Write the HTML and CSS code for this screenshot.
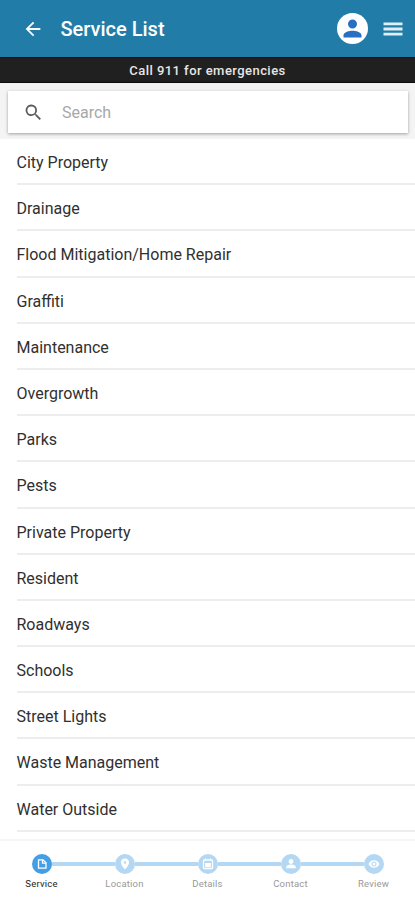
FILE: index.html
```html
<!DOCTYPE html>
<html lang="en">
<head>
<meta charset="utf-8">
<title>Service List</title>
<link rel="stylesheet" href="styles.css">
</head>
<body>
<div class="app">
  <header class="bar">
    <svg class="back" viewBox="0 0 24 24"><path d="M20 11H7.8l5.6-5.6L12 4l-8 8 8 8 1.4-1.4L7.8 13H20z"/></svg>
    <h1 class="title">Service List</h1>
    <span class="avatar"><svg viewBox="0 0 24 24"><path d="M12 12a4 4 0 1 0 0-8 4 4 0 0 0 0 8zm0 2c-2.7 0-8 1.3-8 4v2h16v-2c0-2.7-5.300-4-8-4z"/></svg></span>
    <svg class="menu" viewBox="0 0 24 24"><path d="M2.500 18.500h19v-2.800h-19zm0-5.100h19v-2.800h-19zM2.500 5.500v2.800h19V5.500z"/></svg>
  </header>
  <div class="alert">Call 911 for emergencies</div>
  <div class="search-area">
    <div class="search">
      <svg viewBox="0 0 24 24"><path d="M15.500 14h-.8l-.3-.3A6.500 6.500 0 1 0 13.700 14.400l.3.3v.8l5 5 1.500-1.500zm-6 0a4.500 4.500 0 1 1 0-9 4.500 4.500 0 0 1 0 9z"/></svg>
      <span>Search</span>
    </div>
  </div>
  <ul class="list">
    <li>City Property</li>
    <li>Drainage</li>
    <li>Flood Mitigation/Home Repair</li>
    <li>Graffiti</li>
    <li>Maintenance</li>
    <li>Overgrowth</li>
    <li>Parks</li>
    <li>Pests</li>
    <li>Private Property</li>
    <li>Resident</li>
    <li>Roadways</li>
    <li>Schools</li>
    <li>Street Lights</li>
    <li>Waste Management</li>
    <li>Water Outside</li>
  </ul>
  <nav class="steps">
    <div class="step active">
      <div class="track"><i></i><span class="dot"><svg viewBox="0 0 20 20"><path class="line" d="M6.500 5.800h4.500l3 3v5.400H6.500z"/><path class="line" d="M10.500 6v3.200H14"/></svg></span><i class="on"></i></div>
      <span class="label">Service</span>
    </div>
    <div class="step">
      <div class="track"><i class="on"></i><span class="dot"><svg viewBox="0 0 20 20"><path fill-rule="evenodd" d="M10 4.500a4 4 0 0 0-4 4c0 3 4 7 4 7s4-4 4-7a4 4 0 0 0-4-4zm0 2.800a1.200 1.200 0 1 1 0 2.400 1.200 1.200 0 0 1 0-2.400z"/></svg></span><i class="on"></i></div>
      <span class="label">Location</span>
    </div>
    <div class="step">
      <div class="track"><i class="on"></i><span class="dot"><svg viewBox="0 0 20 20"><rect class="line" x="5.500" y="6" width="9" height="8.500" rx="1"/><path d="M7.200 9h5.600v4H7.200zM7 4.600h1.200V6H7zM11.800 4.600H13V6h-1.200z"/></svg></span><i class="on"></i></div>
      <span class="label">Details</span>
    </div>
    <div class="step">
      <div class="track"><i class="on"></i><span class="dot"><svg viewBox="0 0 20 20"><circle cx="10" cy="7.500" r="2.400"/><path d="M5.300 14.200v-1.400c0-1.600 3-2.400 4.700-2.400s4.700.8 4.700 2.400v1.400z"/></svg></span><i class="on"></i></div>
      <span class="label">Contact</span>
    </div>
    <div class="step">
      <div class="track"><i class="on"></i><span class="dot"><svg viewBox="0 0 20 20"><path fill-rule="evenodd" d="M4.500 10c1-2.300 3-3.700 5.500-3.700s4.500 1.400 5.500 3.700c-1 2.300-3 3.700-5.500 3.700S5.500 12.300 4.500 10zM10 7.500a2.500 2.500 0 1 0 0 5 2.500 2.500 0 0 0 0-5z"/><circle cx="10" cy="10" r="1.500"/></svg></span><i></i></div>
      <span class="label">Review</span>
    </div>
  </nav>
</div>
</body>
</html>
```
FILE: styles.css
```css
* { box-sizing: border-box; }
body { margin: 0; background: #fff; font-family: Roboto, "Liberation Sans", sans-serif; }
.app { width: 415px; height: 900px; display: flex; flex-direction: column; overflow: hidden; }
.bar { height: 57px; flex: none; background: #217da8; display: flex; align-items: center; padding: 0 10px 0 22px; }
.back { width: 22px; height: 22px; fill: #fff; }
.title { margin: 0 auto 0 16.500px; color: #fff; font-size: 20px; line-height: 24px; font-weight: 500; }
.avatar { width: 31px; height: 31px; border-radius: 50%; background: #fff; display: flex; align-items: center; justify-content: center; }
.avatar svg { width: 27px; height: 27px; fill: #286fc4; }
.menu { width: 24px; height: 24px; margin-left: 13px; fill: #e0eef5; }
.alert { height: 26px; flex: none; background: #202020; border-top: 1px solid #0c1216; border-bottom: 1px solid #0c0c0c; color: #e6e6e6; font-size: 13px; font-weight: 500; line-height: 25px; text-align: center; letter-spacing: .45px; }
.search-area { height: 56px; flex: none; background: #f4f4f4; padding: 8px 7px 0 8px; }
.search { height: 42px; background: #fff; display: flex; align-items: center; padding-left: 15px; color: #a8a8a8; font-size: 16px; box-shadow: 0 1px 3px rgba(0,0,0,.35); }
.search svg { width: 21px; height: 21px; fill: #5b5b5b; margin-right: 18px; }
.list { list-style: none; margin: 0; padding: 0 0 0 16.500px; flex: none; }
.list li { height: 46.200px; border-bottom: 2px solid #ededed; color: #303030; font-size: 16px; line-height: 47px; }
.steps { flex: 1; margin-top: 7px; border-top: 2px solid #f5f5f5; display: flex; padding-top: 13px; }
.step { flex: 1; display: flex; flex-direction: column; align-items: center; }
.track { width: 100%; display: flex; align-items: center; }
.track i { flex: 1; height: 4px; }
.track .on { background: #b4d8f3; }
.dot { width: 20px; height: 20px; border-radius: 50%; background: #b4d8f3; display: flex; }
.dot svg { width: 20px; height: 20px; fill: #fff; }
.dot .line { fill: none; stroke: #fff; stroke-width: 1.300; }
.active .dot { background: #429fe5; }
.label { margin-top: 4.500px; font-size: 9.500px; line-height: 12px; color: #999; letter-spacing: .2px; }
.active .label { color: #222; }
```
